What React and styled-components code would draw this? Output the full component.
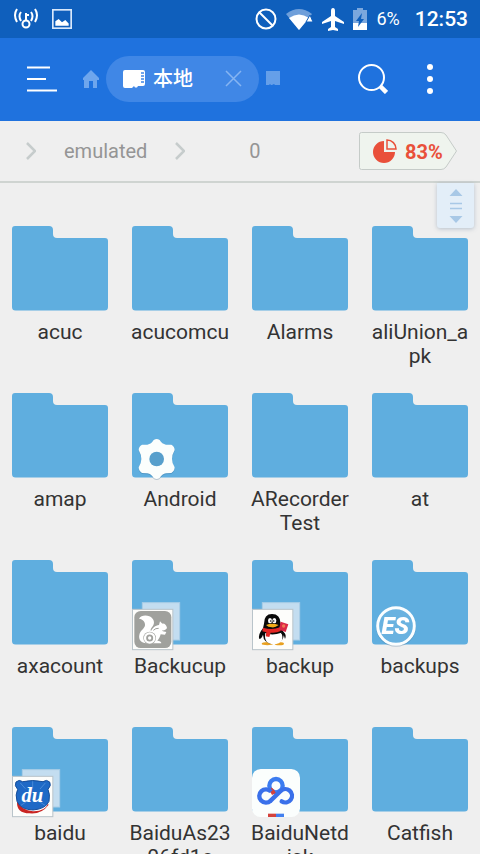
import styled, { createGlobalStyle } from 'styled-components';
import { useState } from 'react';

const GlobalStyle = createGlobalStyle`
  * {
    box-sizing: border-box;
  }
  body {
    margin: 0;
    background: #efefef;
    font-family: Roboto, "Noto Sans CJK SC", sans-serif;
  }
  button {
    border: 0;
    padding: 0;
    background: none;
    font: inherit;
    color: inherit;
    cursor: pointer;
  }
  svg {
    display: block;
    flex: none;
  }
`;

const Screen = styled.div`
  display: flex;
  flex-direction: column;
  height: 100vh;
  overflow: hidden;
`;

const StatusBar = styled.div`
  display: flex;
  align-items: center;
  justify-content: space-between;
  flex: none;
  height: 38px;
  padding: 0 12px;
  background: #0f5fbc;
  color: #fff;
`;

const StatusGroup = styled.div`
  display: flex;
  align-items: center;
  gap: ${(p) => p.$gap}px;
`;

const Battery = styled.span`
  font-size: 18px;
  line-height: 24px;
`;

const Clock = styled.span`
  margin-left: 6px;
  font-size: 21px;
  font-weight: 500;
  line-height: 24px;
`;

const Header = styled.header`
  display: flex;
  align-items: center;
  flex: none;
  height: 83px;
  padding: 0 32px 2px 26px;
  background: #1f72de;
`;

const IconButton = styled.button`
  display: flex;
  align-items: center;
  justify-content: center;
`;

const Tabs = styled.div`
  display: flex;
  align-items: center;
  flex: 1;
  gap: 7px;
  margin-left: 25px;
`;

const Tab = styled.div`
  display: flex;
  align-items: center;
  justify-content: space-between;
  width: 153px;
  height: 46px;
  padding: 0 17px;
  border-radius: 23px;
  background: #4087e6;
`;

const TabTitle = styled.button`
  display: flex;
  align-items: center;
  gap: 8px;
  color: #fff;
  font-size: 20px;
  font-weight: 500;
  line-height: 28px;
`;

const Actions = styled.div`
  display: flex;
  align-items: center;
  gap: 32px;
`;

const PathBar = styled.div`
  display: flex;
  align-items: center;
  justify-content: space-between;
  flex: none;
  height: 62px;
  padding: 0 23px 0 26px;
  border-bottom: 2px solid #cfd4d1;
`;

const Crumbs = styled.nav`
  display: flex;
  align-items: center;
`;

const Crumb = styled.a`
  margin-left: ${(p) => (p.$wide ? 64 : 28)}px;
  margin-right: 28px;
  color: #959595;
  font-size: 20px;
  line-height: 24px;
  text-decoration: none;
`;

const Usage = styled.button`
  position: relative;
  display: flex;
  align-items: center;
  gap: 8px;
  width: 98px;
  height: 38px;
  padding: 2px 0 0 14px;
  color: #e9503a;
  font-size: 20px;
  font-weight: 700;
  line-height: 24px;
`;

const UsageShape = styled.svg`
  position: absolute;
  top: 0;
  left: 0;
  z-index: -1;
`;

const Files = styled.main`
  position: relative;
  flex: 1;
  min-height: 0;
`;

const Grid = styled.div`
  display: grid;
  grid-template-columns: repeat(4, 1fr);
  grid-auto-rows: 167px;
  height: 100%;
  padding-top: 43px;
  overflow-y: auto;
  scrollbar-width: none;
`;

const Tile = styled.button`
  display: flex;
  flex-direction: column;
  align-items: center;
  gap: 9px;
`;

const FolderBox = styled.span`
  position: relative;
  display: block;
`;

const BadgeSvg = styled.svg`
  position: absolute;
  left: 0;
  top: 42px;
  overflow: visible;
`;

const Name = styled.span`
  color: #333;
  font-size: 21px;
  line-height: 24px;
  text-align: center;
  white-space: pre;
`;

const ScrollThumb = styled.button`
  position: absolute;
  top: 0;
  right: 6px;
  display: flex;
  align-items: center;
  justify-content: center;
  width: 37px;
  height: 45px;
  border-radius: 0 0 3px 3px;
  background: #e3eef8;
  box-shadow: 0 1px 4px rgba(80, 110, 140, 0.35);
`;

const folders = [
  { name: 'acuc' },
  { name: 'acucomcu' },
  { name: 'Alarms' },
  { name: 'aliUnion_a\npk' },
  { name: 'amap' },
  { name: 'Android', badge: 'gear' },
  { name: 'ARecorder\nTest' },
  { name: 'at' },
  { name: 'axacount' },
  { name: 'Backucup', badge: 'squirrel' },
  { name: 'backup', badge: 'penguin' },
  { name: 'backups', badge: 'es' },
  { name: 'baidu', badge: 'bear' },
  { name: 'BaiduAs23\n06fd1c' },
  { name: 'BaiduNetd\nisk', badge: 'cloud' },
  { name: 'Catfish' },
];

function Folder() {
  return (
    <svg width="96" height="85" viewBox="0 0 96 85">
      <path
        d="M3 0H37Q41 0 41 4V8Q41 12 45 12H93Q96 12 96 15V81Q96 84.500 92.500 84.500H3.500Q0 84.500 0 81V3Q0 0 3 0Z"
        fill="#5faedf"
      />
    </svg>
  );
}

// pair of overlapping cards behind an app logo
function Cards() {
  return (
    <>
      <rect x="67" y="143" width="112" height="112" fill="#c3ddf0" stroke="#a9cde6" strokeWidth="3" />
      <rect x="37.500" y="163" width="121" height="121" fill="#fdfdfb" stroke="#b9c4ca" strokeWidth="3" />
    </>
  );
}

function Badge({ type }) {
  if (type === 'gear') {
    return (
      <BadgeSvg width="48" height="48" viewBox="36 150 144 144">
        <g filter="drop-shadow(0 2px 2px rgba(40,90,130,.4))">
          <path
            d="M101 165Q110 159 119 165Q126 177 138 179L154 179Q164 184 164 195Q156 209 156 222Q156 235 164 247Q164 258 154 264L138 265Q126 267 119 279Q110 285 101 279Q94 267 82 265L66 264Q56 258 56 247Q64 235 64 222Q64 209 56 195Q56 184 66 179L82 179Q94 177 101 165Z"
            fill="#fbfefd"
          />
        </g>
        <circle cx="110" cy="222" r="22" fill="#579fcc" />
      </BadgeSvg>
    );
  }
  if (type === 'squirrel') {
    return (
      <BadgeSvg width="48" height="48" viewBox="36 141 144 144">
        <Cards />
        <rect x="43" y="168" width="111" height="111" rx="19" fill="#a0a19d" />
        <path
          d="M57 191C62 181 78 179 88 184C102 190 106 204 98 214C93 221 90 224 93 229C97 219 106 211 117 210L120 199L127 206C134 205 139 210 141 219C138 225 132 227 126 226C129 231 134 230 139 231L135 239L122 238C120 245 117 252 112 257C119 257 124 260 124 265H80C63 264 55 253 58 240C60 227 74 221 75 211C76 201 69 193 57 191Z"
          fill="#fff"
        />
        <circle cx="89" cy="249" r="19" fill="#a0a19d" />
        <circle cx="89" cy="249" r="14" fill="none" stroke="#fff" strokeWidth="7" />
        <circle cx="89" cy="249" r="5" fill="#fff" />
        <path d="M100 226Q107 219 116 220" fill="none" stroke="#a0a19d" strokeWidth="3" />
      </BadgeSvg>
    );
  }
  if (type === 'penguin') {
    return (
      <BadgeSvg width="48" height="48" viewBox="36 141 144 144">
        <Cards />
        <ellipse cx="82" cy="266" rx="17" ry="5" fill="#e8a020" />
        <ellipse cx="118" cy="266" rx="14" ry="5" fill="#e8a020" />
        <path d="M72 206Q72 177 96 177Q121 177 122 206L131 234Q134 263 100 267Q70 265 69 239Q64 252 58 252Q53 239 69 220Z" fill="#090909" />
        <path d="M76 234Q97 243 124 233Q137 265 101 268Q70 266 76 234Z" fill="#fff" />
        <ellipse cx="90" cy="197" rx="6" ry="8" fill="#fff" />
        <ellipse cx="103" cy="197" rx="6" ry="8" fill="#fff" />
        <circle cx="92" cy="198" r="2.500" fill="#111" />
        <circle cx="101" cy="198" r="2.500" fill="#111" />
        <path d="M78 210Q96 203 116 210Q105 219 95 217Q84 217 78 210Z" fill="#f3ac18" />
        <path d="M69 218Q96 226 120 217L122 228Q109 235 92 233L88 246L77 244L79 232L67 229Z" fill="#e32624" />
        <path d="M122 200L145 208L137 231L117 224Z" fill="#da2847" />
        <circle cx="131" cy="213" r="5" fill="#f17a55" />
        <path d="M123 235Q132 240 135 252Q141 238 130 230Z" fill="#090909" />
      </BadgeSvg>
    );
  }
  if (type === 'es') {
    return (
      <BadgeSvg width="48" height="48" viewBox="36 141 144 144">
        <g filter="drop-shadow(0 2px 2px rgba(40,90,130,.4))">
          <circle cx="108" cy="213" r="55" fill="#69b2e0" stroke="#fbfeff" strokeWidth="9" />
          <text
            x="106"
            y="238"
            textAnchor="middle"
            fontFamily="Roboto, sans-serif"
            fontSize="72"
            fontStyle="italic"
            fontWeight="900"
            fill="#fff"
          >
            ES
          </text>
        </g>
      </BadgeSvg>
    );
  }
  if (type === 'bear') {
    return (
      <BadgeSvg width="48" height="48" viewBox="36 141 144 144">
        <Cards />
        <path d="M51 240Q50 274 88 274Q124 278 146 248L138 241L60 230Z" fill="#c92523" />
        <path d="M57 240Q63 265 99 268Q135 269 145 243Z" fill="#fff" />
        <path
          d="M68 179Q57 171 48 180Q42 191 53 202Q45 218 51 238Q62 263 99 264Q137 261 147 238Q151 217 144 202Q155 190 149 180Q140 171 129 179Q98 172 68 179Z"
          fill="#1e69c6"
          stroke="#164d99"
          strokeWidth="3"
        />
        <path d="M61 183L76 200M136 183L120 201M98 178V200M63 250L82 237M135 250L115 237" stroke="#5f9be0" strokeWidth="2" />
        <text
          x="97"
          y="240"
          textAnchor="middle"
          fontFamily="Liberation Serif, serif"
          fontSize="62"
          fontStyle="italic"
          fontWeight="700"
          fill="#fff"
        >
          du
        </text>
      </BadgeSvg>
    );
  }
  return (
    <BadgeSvg width="48" height="48" viewBox="36 147 144 144">
      <rect x="36" y="147" width="144" height="144" rx="26" fill="#fbfefd" />
      <g fill="none" strokeWidth="13">
        <circle cx="108" cy="197" r="20" stroke="#3c7cf0" />
        <path d="M91 208Q98 213 102 222" stroke="#d4423c" />
        <path d="M92 242A20 20 0 1 1 93 215" stroke="#3a70ea" />
        <path d="M92 242L121 214A20 20 0 1 1 125 244" stroke="#3a70ea" strokeLinecap="round" />
      </g>
      <path d="M84 281H108V291H84Z" fill="#d4423c" />
      <path d="M108 281H132V291H108Z" fill="#4380ef" />
    </BadgeSvg>
  );
}

function Chevron() {
  return (
    <svg width="10" height="18" viewBox="0 0 10 18" fill="none" stroke="#c6cccc" strokeWidth="2.500">
      <path d="M1 1L9 9L1 17" />
    </svg>
  );
}

function Status() {
  return (
    <StatusBar>
      <StatusGroup $gap={13}>
        <svg width="27" height="22" viewBox="0 0 27 22" fill="none" stroke="#fff" strokeWidth="2">
          <circle cx="14" cy="16" r="3.500" />
          <path d="M14 12V5M14 7H17M9 4Q6 8 9 13M19 4Q22 8 19 13M5 1Q1 7 5 14M23 1Q27 7 23 14" />
        </svg>
        <svg width="20" height="20" viewBox="0 0 18 18">
          <rect x="0.750" y="0.750" width="16.500" height="16.500" fill="none" stroke="#d8e8fb" strokeWidth="1.500" />
          <path d="M3 15V11L6 9L9 12L12 10L15 13V15Z" fill="#fff" />
        </svg>
      </StatusGroup>
      <StatusGroup $gap={9}>
        <svg width="22" height="22" viewBox="0 0 22 22" fill="none" stroke="#fff" strokeWidth="2">
          <circle cx="11" cy="11" r="9.500" />
          <path d="M4.500 4.500L17.500 17.500" />
        </svg>
        <svg width="27" height="21" viewBox="0 0 27 21">
          <path d="M0 5Q13 -5 26 5L13 21Z" fill="#6f9fda" />
          <path d="M3 9Q13 2 23 9L13 21Z" fill="#fff" />
          <path d="M20 13L24 6L27 13Z" fill="#fff" stroke="#0f5fbc" />
        </svg>
        <svg width="22" height="23" viewBox="0 0 22 23">
          <path d="M11 0Q13 0 13 3V8L22 14V16L13 13V19L16 21V23L11 22L6 23V21L9 19V13L0 16V14L9 8V3Q9 0 11 0Z" fill="#fff" />
        </svg>
        <svg width="14" height="22" viewBox="0 0 14 22">
          <path d="M4 0H10V2H14V22H0V2H4Z" fill="#7ba7dd" />
          <path d="M0 15H14V22H0Z" fill="#fff" />
          <path d="M9 5L3 13H6L5 19L11 11H8Z" fill="#0f5fbc" />
        </svg>
        <Battery>6%</Battery>
        <Clock>12:53</Clock>
      </StatusGroup>
    </StatusBar>
  );
}

function App() {
  const [selected, setSelected] = useState(null);

  return (
    <Screen>
      <GlobalStyle />
      <Status />
      <Header>
        <IconButton aria-label="Menu">
          <svg width="32" height="26" viewBox="0 0 32 26" stroke="#fff" strokeWidth="2.200">
            <path d="M1 1.500H24M1 13H20M1 24.500H31" />
          </svg>
        </IconButton>
        <Tabs>
          <IconButton aria-label="Home">
            <svg width="16" height="18" viewBox="0 0 16 18">
              <path d="M8 0L16 8V10H14V18H10V11H6V18H1V10H0V8Z" fill="#6ea6ed" />
            </svg>
          </IconButton>
          <Tab>
            <TabTitle>
              <svg width="22" height="18" viewBox="0 0 22 18">
                <path d="M2 0H20Q22 0 22 2V14Q22 16 20 16H15L14 17.500H12L11 16L9 18H2Q0 18 0 16V2Q0 0 2 0Z" fill="#fff" />
                <path d="M18 3H21M18 6H21M18 9H21M18 12H21" stroke="#4087e6" strokeWidth="1.300" />
              </svg>
              本地
            </TabTitle>
            <IconButton aria-label="Close tab">
              <svg width="17" height="17" viewBox="0 0 17 17" stroke="#86b5f2" strokeWidth="1.500">
                <path d="M1 1L16 16M16 1L1 16" />
              </svg>
            </IconButton>
          </Tab>
          <IconButton aria-label="Next tab">
            <svg width="14" height="15" viewBox="0 0 14 15">
              <path d="M0 0H14V14H9L8 13L6 14H5L4 13L3 14H0Z" fill="#659fe9" />
            </svg>
          </IconButton>
        </Tabs>
        <Actions>
          <IconButton aria-label="Search">
            <svg width="30" height="30" viewBox="0 0 30 30" fill="none" stroke="#fff">
              <circle cx="13.500" cy="13.500" r="12.500" strokeWidth="2" />
              <path d="M22 22L28.500 28.500" strokeWidth="4.500" />
            </svg>
          </IconButton>
          <IconButton aria-label="More">
            <svg width="28" height="30" viewBox="0 0 28 30" fill="#fff">
              <circle cx="10" cy="3" r="3" />
              <circle cx="10" cy="15" r="3" />
              <circle cx="10" cy="27" r="3" />
            </svg>
          </IconButton>
        </Actions>
      </Header>
      <PathBar>
        <Crumbs>
          <Chevron />
          <Crumb href="#emulated">emulated</Crumb>
          <Chevron />
          <Crumb href="#0" $wide>0</Crumb>
        </Crumbs>
        <Usage>
          <UsageShape width="98" height="38" viewBox="0 0 98 38">
            <path d="M2.500 0.500H82Q85 0.500 87 3L97.500 19L87 35Q85 37.500 82 37.500H2.500Q0.500 37.500 0.500 35.500V2.500Q0.500 0.500 2.500 0.500Z" fill="#eff4ee" stroke="#c5cbc8" />
          </UsageShape>
          <svg width="24" height="26" viewBox="0 -2 24 26">
            <path d="M11 0V11H22A11 11 0 1 1 11 0Z" fill="#e9503a" />
            <path d="M14 -1V8H23A9 9 0 0 0 14 -1Z" fill="none" stroke="#e9503a" strokeWidth="1.500" />
          </svg>
          83%
        </Usage>
      </PathBar>
      <Files>
        <Grid>
          {folders.map((item, index) => (
            <Tile key={item.name} aria-pressed={selected === index} onClick={() => setSelected(index)}>
              <FolderBox>
                <Folder />
                {item.badge && <Badge type={item.badge} />}
              </FolderBox>
              <Name>{item.name}</Name>
            </Tile>
          ))}
        </Grid>
        <ScrollThumb aria-label="Scroll">
          <svg width="14" height="34" viewBox="0 0 14 34">
            <path d="M7 0L13.500 7H0.500ZM7 34L0.500 27H13.500Z" fill="#a8c8e6" />
            <path d="M1 14.500H13M1 19.500H13" stroke="#a8c8e6" strokeWidth="1.500" />
          </svg>
        </ScrollThumb>
      </Files>
    </Screen>
  );
}

export default App;
